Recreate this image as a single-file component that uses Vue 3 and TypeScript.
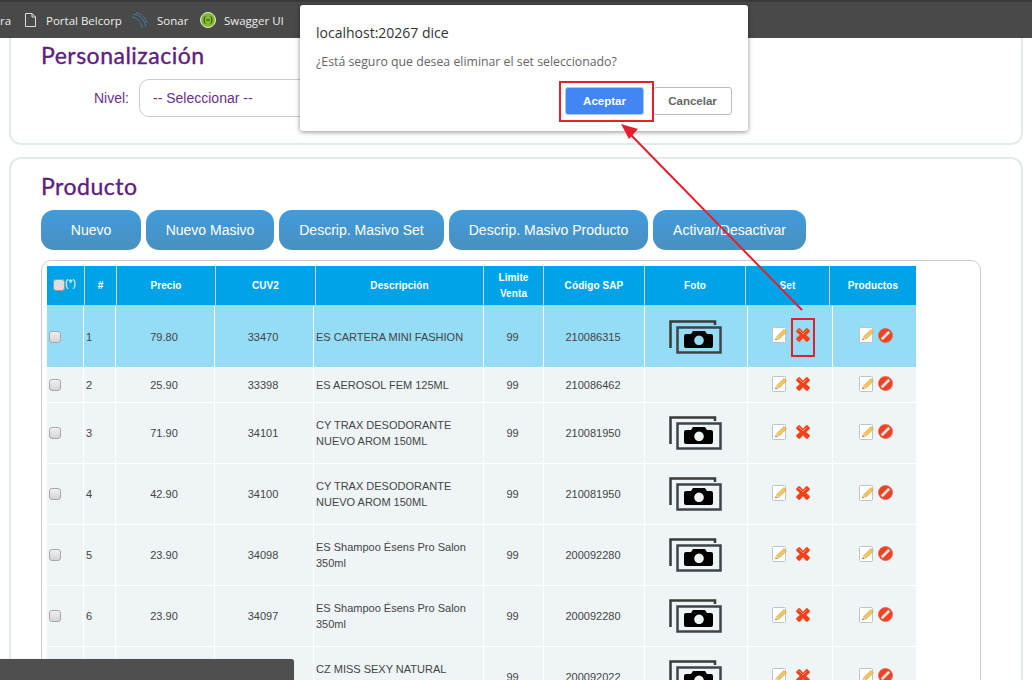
<script setup lang="ts">
interface Row {
  id: number
  price: string
  cuv: string
  desc: string
  sap: string
  photo: boolean
  height: number
  selected?: boolean
}

const headers = ['#', 'Precio', 'CUV2', 'Descripción', 'Limite Venta', 'Código SAP', 'Foto', 'Set', 'Productos']
const actions = ['Nuevo', 'Nuevo Masivo', 'Descrip. Masivo Set', 'Descrip. Masivo Producto', 'Activar/Desactivar']

const rows: Row[] = [
  { id: 1, price: '79.80', cuv: '33470', desc: 'ES CARTERA MINI FASHION', sap: '210086315', photo: true, height: 62, selected: true },
  { id: 2, price: '25.90', cuv: '33398', desc: 'ES AEROSOL FEM 125ML', sap: '210086462', photo: false, height: 35 },
  { id: 3, price: '71.90', cuv: '34101', desc: 'CY TRAX DESODORANTE NUEVO AROM 150ML', sap: '210081950', photo: true, height: 61 },
  { id: 4, price: '42.90', cuv: '34100', desc: 'CY TRAX DESODORANTE NUEVO AROM 150ML', sap: '210081950', photo: true, height: 61 },
  { id: 5, price: '23.90', cuv: '34098', desc: 'ES Shampoo Ésens Pro Salon 350ml', sap: '200092280', photo: true, height: 61 },
  { id: 6, price: '23.90', cuv: '34097', desc: 'ES Shampoo Ésens Pro Salon 350ml', sap: '200092280', photo: true, height: 61 },
  { id: 7, price: '23.90', cuv: '34096', desc: 'CZ MISS SEXY NATURAL ROLL ON 50ML', sap: '200092022', photo: true, height: 61 },
]
</script>

<template>
  <div class="page">
    <header class="bookmarks">
      <span class="bm-cut">ra</span>
      <svg class="bm-page" width="11" height="14" viewBox="0 0 11 14">
        <path d="M.5.5h6.500l3.500 3.500v9.500h-10z M7 .5v3.500h3.500" fill="none" stroke="#ddd" />
      </svg>
      <span class="bm-text bm-portal">Portal Belcorp</span>
      <svg class="bm-sonar" width="16" height="17" viewBox="0 0 16 17">
        <g fill="none" stroke="#3f7fa8" stroke-width="1">
          <path d="M1 2.500c6 0 11 4 13 12" />
          <path d="M4 .8c5 .8 9 4.500 11 10" />
          <path d="M0 5c5 .5 8.500 4 10.500 11" />
        </g>
      </svg>
      <span class="bm-text bm-name">Sonar</span>
      <svg class="bm-swagger" width="16" height="16" viewBox="0 0 16 16">
        <circle cx="8" cy="8" r="7.500" fill="#85b92e" stroke="#e8f0dc" />
        <path d="M5.500 4.500c-1.500 0-1 2.500-1.500 3.500.5 1 0 3.500 1.500 3.500M10.500 4.500c1.500 0 1 2.500 1.500 3.500-.5 1-0 3.500-1.500 3.500M6 8h4" fill="none" stroke="#2f4a12" />
      </svg>
      <span class="bm-text">Swagger UI</span>
    </header>

    <section class="card card-top">
      <h2>Personalización</h2>
      <div class="field">
        <label>Nivel:</label>
        <div class="select">-- Seleccionar --</div>
      </div>
    </section>

    <section class="card card-product">
      <h2>Producto</h2>
      <div class="actions">
        <button v-for="a in actions" :key="a" type="button">{{ a }}</button>
      </div>

      <div class="table-box">
        <div class="grid grid-head">
          <div class="th th-check"><input type="checkbox" /><small>(*)</small></div>
          <div v-for="h in headers" :key="h" class="th">{{ h }}</div>
        </div>

        <div
          v-for="r in rows"
          :key="r.id"
          class="grid grid-row"
          :class="{ selected: r.selected }"
          :style="{ height: r.height + 'px' }"
        >
          <div class="td td-check"><input type="checkbox" /></div>
          <div class="td td-left">{{ r.id }}</div>
          <div class="td">{{ r.price }}</div>
          <div class="td">{{ r.cuv }}</div>
          <div class="td td-left td-desc">{{ r.desc }}</div>
          <div class="td">99</div>
          <div class="td">{{ r.sap }}</div>
          <div class="td">
            <svg v-if="r.photo" class="camera" width="53" height="34" viewBox="0 0 53 34">
              <path d="M1.500 28V1.500H46V5" fill="none" stroke="#3a3a3a" stroke-width="2.500" />
              <rect x="8.500" y="7.500" width="43" height="25" fill="none" stroke="#3f4448" stroke-width="2.500" />
              <path
                fill-rule="evenodd"
                d="M17 14h5l2-3h12l2 3h4a2 2 0 0 1 2 2v10a2 2 0 0 1-2 2H17a2 2 0 0 1-2-2V16a2 2 0 0 1 2-2z M30 15.500a4.800 4.800 0 1 0 .01 0z"
              />
            </svg>
          </div>
          <div class="td td-icons td-set">
            <svg class="ico" width="16" height="16" viewBox="0 0 16 16">
              <rect x=".5" y=".5" width="13" height="15" rx="1" fill="#fff" stroke="#bcc4c8" />
              <path d="M3.500 13l1-3.200L12 2.500l2.500 2.500L7 12z" fill="#f2c65c" stroke="#c99a45" stroke-width=".6" />
              <path d="M3.500 13l1-3.200L7 12z" fill="#ecd9b4" />
              <path d="M3.500 13l.4-1.400 1 1z" fill="#6a4a28" />
            </svg>
            <svg class="ico" width="16" height="16" viewBox="0 0 16 16">
              <path d="M3.500 1.500h1.500l3 3.500 3-3.500h1.500l2 2V5l-3.500 3 3.500 3v1.500l-2 2H11L8 11l-3 3.500H3.500l-2-2V11L5 8 1.500 5V3.500z" fill="#f2401a" stroke="#ea5f34" stroke-width=".6" />
              <path d="M3.500 3.500h1L8 7l3.500-3.500" fill="none" stroke="#ff9c70" stroke-width="1" />
            </svg>
          </div>
          <div class="td td-icons td-prod">
            <svg class="ico" width="16" height="16" viewBox="0 0 16 16">
              <rect x=".5" y=".5" width="13" height="15" rx="1" fill="#fff" stroke="#bcc4c8" />
              <path d="M3.500 13l1-3.200L12 2.500l2.500 2.500L7 12z" fill="#f2c65c" stroke="#c99a45" stroke-width=".6" />
              <path d="M3.500 13l1-3.200L7 12z" fill="#ecd9b4" />
              <path d="M3.500 13l.4-1.400 1 1z" fill="#6a4a28" />
            </svg>
            <svg class="ico" width="15" height="15" viewBox="0 0 15 15">
              <circle cx="7.500" cy="7.500" r="7" fill="#ec4326" stroke="#e8604a" stroke-width=".8" />
              <path d="M2.800 10.300 L10.300 2.800 L12.200 4.700 L4.700 12.200z" fill="#fbe0d8" />
            </svg>
          </div>
        </div>
      </div>
    </section>

    <!-- alert del navegador y anotaciones encima de la captura -->
    <div class="dialog">
      <div class="dlg-title">localhost:20267 dice</div>
      <div class="dlg-msg">¿Está seguro que desea eliminar el set seleccionado?</div>
      <div class="dlg-btns">
        <button type="button" class="btn-ok">Aceptar</button>
        <button type="button" class="btn-cancel">Cancelar</button>
      </div>
    </div>

    <div class="mark mark-ok"></div>
    <div class="mark mark-x"></div>
    <svg class="arrow" width="1032" height="680" viewBox="0 0 1032 680">
      <path d="M802 310L630 134" stroke="#e3202c" stroke-width="2" fill="none" />
      <path d="M621 124l17 5-9 10z" fill="#e3202c" />
    </svg>

    <div class="download-bar"></div>
  </div>
</template>

<style>
html,
body {
  margin: 0;
  height: 680px;
  overflow: hidden;
  background: #fff;
}
</style>

<style scoped>
.page {
  position: relative;
  width: 1032px;
  height: 680px;
  overflow: hidden;
  font-family: "Liberation Sans", Arial, sans-serif;
}

.bookmarks {
  height: 36px;
  border-top: 2px solid #3a3a3a;
  background: #494949;
  display: flex;
  align-items: center;
  color: #eee;
  font-family: "Open Sans", sans-serif;
  font-size: 11.5px;
  box-sizing: content-box;
}
.bm-cut {
  width: 25px;
  flex: none;
}
.bm-page {
  flex: none;
}
.bm-portal {
  margin-left: 10px;
  width: 86px;
}
.bm-sonar {
  flex: none;
}
.bm-name {
  margin-left: 9px;
  width: 43px;
}
.bm-swagger {
  flex: none;
}
.bm-swagger + .bm-text {
  margin-left: 8px;
}

.card {
  margin: 0 9px 0 9px;
  border: 2px solid #e0ecec;
  border-radius: 12px;
  box-sizing: border-box;
  background: #fff;
}
.card h2 {
  margin: 0;
  font-family: Lato, sans-serif;
  font-weight: 400;
  font-size: 23px;
  line-height: 28px;
  color: #5d2080;
  letter-spacing: 0.5px;
  -webkit-text-stroke: 0.35px #5d2080;
}
.card-top {
  height: 107px;
  border-top: none;
  border-radius: 0 0 12px 12px;
  padding: 3px 30px 0;
}
.field {
  display: flex;
  align-items: center;
  margin-top: 10px;
}
.field label {
  width: 88px;
  text-align: right;
  font-size: 14px;
  color: #6b2f8e;
  margin-right: 10px;
}
.select {
  width: 360px;
  height: 38px;
  border: 1px solid #ccc;
  border-radius: 10px;
  box-sizing: border-box;
  padding-left: 13px;
  line-height: 36px;
  font-size: 14px;
  color: #6b2f8e;
}

.card-product {
  margin-top: 12px;
  height: 560px;
  padding: 13px 0 0 30px;
}
.actions {
  display: flex;
  gap: 5px;
  margin-top: 10px;
}
.actions button {
  height: 40px;
  border: none;
  border-radius: 13px;
  background: linear-gradient(#3f9cdd, #4a90bf);
  color: #fff;
  font-family: inherit;
  font-size: 14px;
  padding: 0;
}
.actions button:nth-child(1) { width: 100px; }
.actions button:nth-child(2) { width: 128px; }
.actions button:nth-child(3) { width: 165px; }
.actions button:nth-child(4) { width: 199px; }
.actions button:nth-child(5) { width: 153px; }

.table-box {
  width: 940px;
  margin-top: 10px;
  padding: 5px 0 0 5px;
  border: 1px solid #ccc;
  border-radius: 10px;
  box-sizing: border-box;
  height: 500px;
}
.grid {
  display: grid;
  width: 869px;
  font-size: 11px;
  color: #444;
}
.grid-head {
  grid-template-columns: 38px 32px 99px 100px 168px 60px 101px 101px 84px 86px;
  height: 40px;
  background: #00a3e8;
  border-bottom: 1px solid #c8c8c8;
  box-sizing: border-box;
}
.th {
  display: flex;
  align-items: center;
  justify-content: center;
  text-align: center;
  color: #fff;
  font-size: 10px;
  letter-spacing: 0.1px;
  font-weight: 700;
  line-height: 16px;
  border-right: 1px solid #d0d0d0;
  padding: 0 8px;
}
.th:last-child {
  border-right: none;
}
input[type="checkbox"] {
  appearance: none;
  width: 12px;
  height: 12px;
  margin: 0;
  flex: none;
  border: 1px solid #a8a8a8;
  border-radius: 3px;
  background: linear-gradient(#f0f0f0, #d4d4d4);
  box-sizing: border-box;
}
.th-check {
  padding: 0 0 0 6px;
  justify-content: flex-start;
  align-items: flex-start;
}
.th-check input[type="checkbox"] {
  margin-top: 13px;
  background: #dedede;
  border-color: #999;
}
.th-check small {
  font-size: 10px;
  font-weight: 400;
  line-height: 12px;
  margin-top: 12px;
}

.grid-row {
  grid-template-columns: 37px 32px 99px 99px 170px 60px 101px 103px 85px 83px;
  background: #eff4f7;
  border-bottom: 1px solid #fff;
  box-sizing: border-box;
}
.grid-row.selected {
  background: #95dcf6;
}
.td {
  display: flex;
  align-items: center;
  justify-content: center;
  text-align: center;
  line-height: 16px;
  border-right: 1px solid #fff;
  min-width: 0;
  overflow: hidden;
  padding-right: 2px;
}
.td:last-child {
  border-right: none;
}
.td-left {
  justify-content: flex-start;
  text-align: left;
  padding-left: 2px;
}
.td-desc {
  padding-right: 10px;
}
.td-check {
  justify-content: flex-start;
  padding-left: 2px;
}
.td-icons {
  gap: 7px;
  padding-bottom: 3px;
}
.td-set {
  padding-left: 5px;
}
.td-prod {
  gap: 3px;
  padding-left: 5px;
}
.ico {
  flex: none;
}
.camera {
  flex: none;
}

.dialog {
  position: absolute;
  left: 300px;
  top: 5px;
  width: 448px;
  height: 126px;
  background: #fff;
  border-radius: 3px;
  box-shadow: 0 1px 5px rgba(0, 0, 0, 0.45);
  padding: 0 16px;
  box-sizing: border-box;
  font-family: "Open Sans", sans-serif;
}
.dlg-title {
  margin-top: 18px;
  font-size: 14px;
  line-height: 20px;
  color: #333;
}
.dlg-msg {
  margin-top: 9px;
  font-size: 12.3px;
  line-height: 20px;
  color: #666;
}
.dlg-btns {
  display: flex;
  justify-content: flex-end;
  gap: 9px;
  margin-top: 15px;
}
.dlg-btns button {
  width: 79px;
  height: 28px;
  border-radius: 3px;
  font-family: "Liberation Sans", Arial, sans-serif;
  font-size: 11.5px;
  font-weight: 700;
  padding: 0;
}
.btn-ok {
  background: #4285f4;
  color: #fff;
  border: 1px solid #a9c8fa;
}
.btn-cancel {
  background: #fff;
  color: #666;
  border: 1px solid #bbb;
}

.mark {
  position: absolute;
  border: 2px solid #e3202c;
  box-sizing: border-box;
}
.mark-ok {
  left: 559px;
  top: 81px;
  width: 95px;
  height: 41px;
}
.mark-x {
  left: 791px;
  top: 318px;
  width: 24px;
  height: 39px;
}
.arrow {
  position: absolute;
  left: 0;
  top: 0;
  pointer-events: none;
}
.download-bar {
  position: absolute;
  left: 0;
  bottom: 0;
  width: 294px;
  height: 21px;
  background: #4f4f4f;
  border-radius: 0 3px 0 0;
  box-shadow: 0 0 1px #bbb;
}
</style>
